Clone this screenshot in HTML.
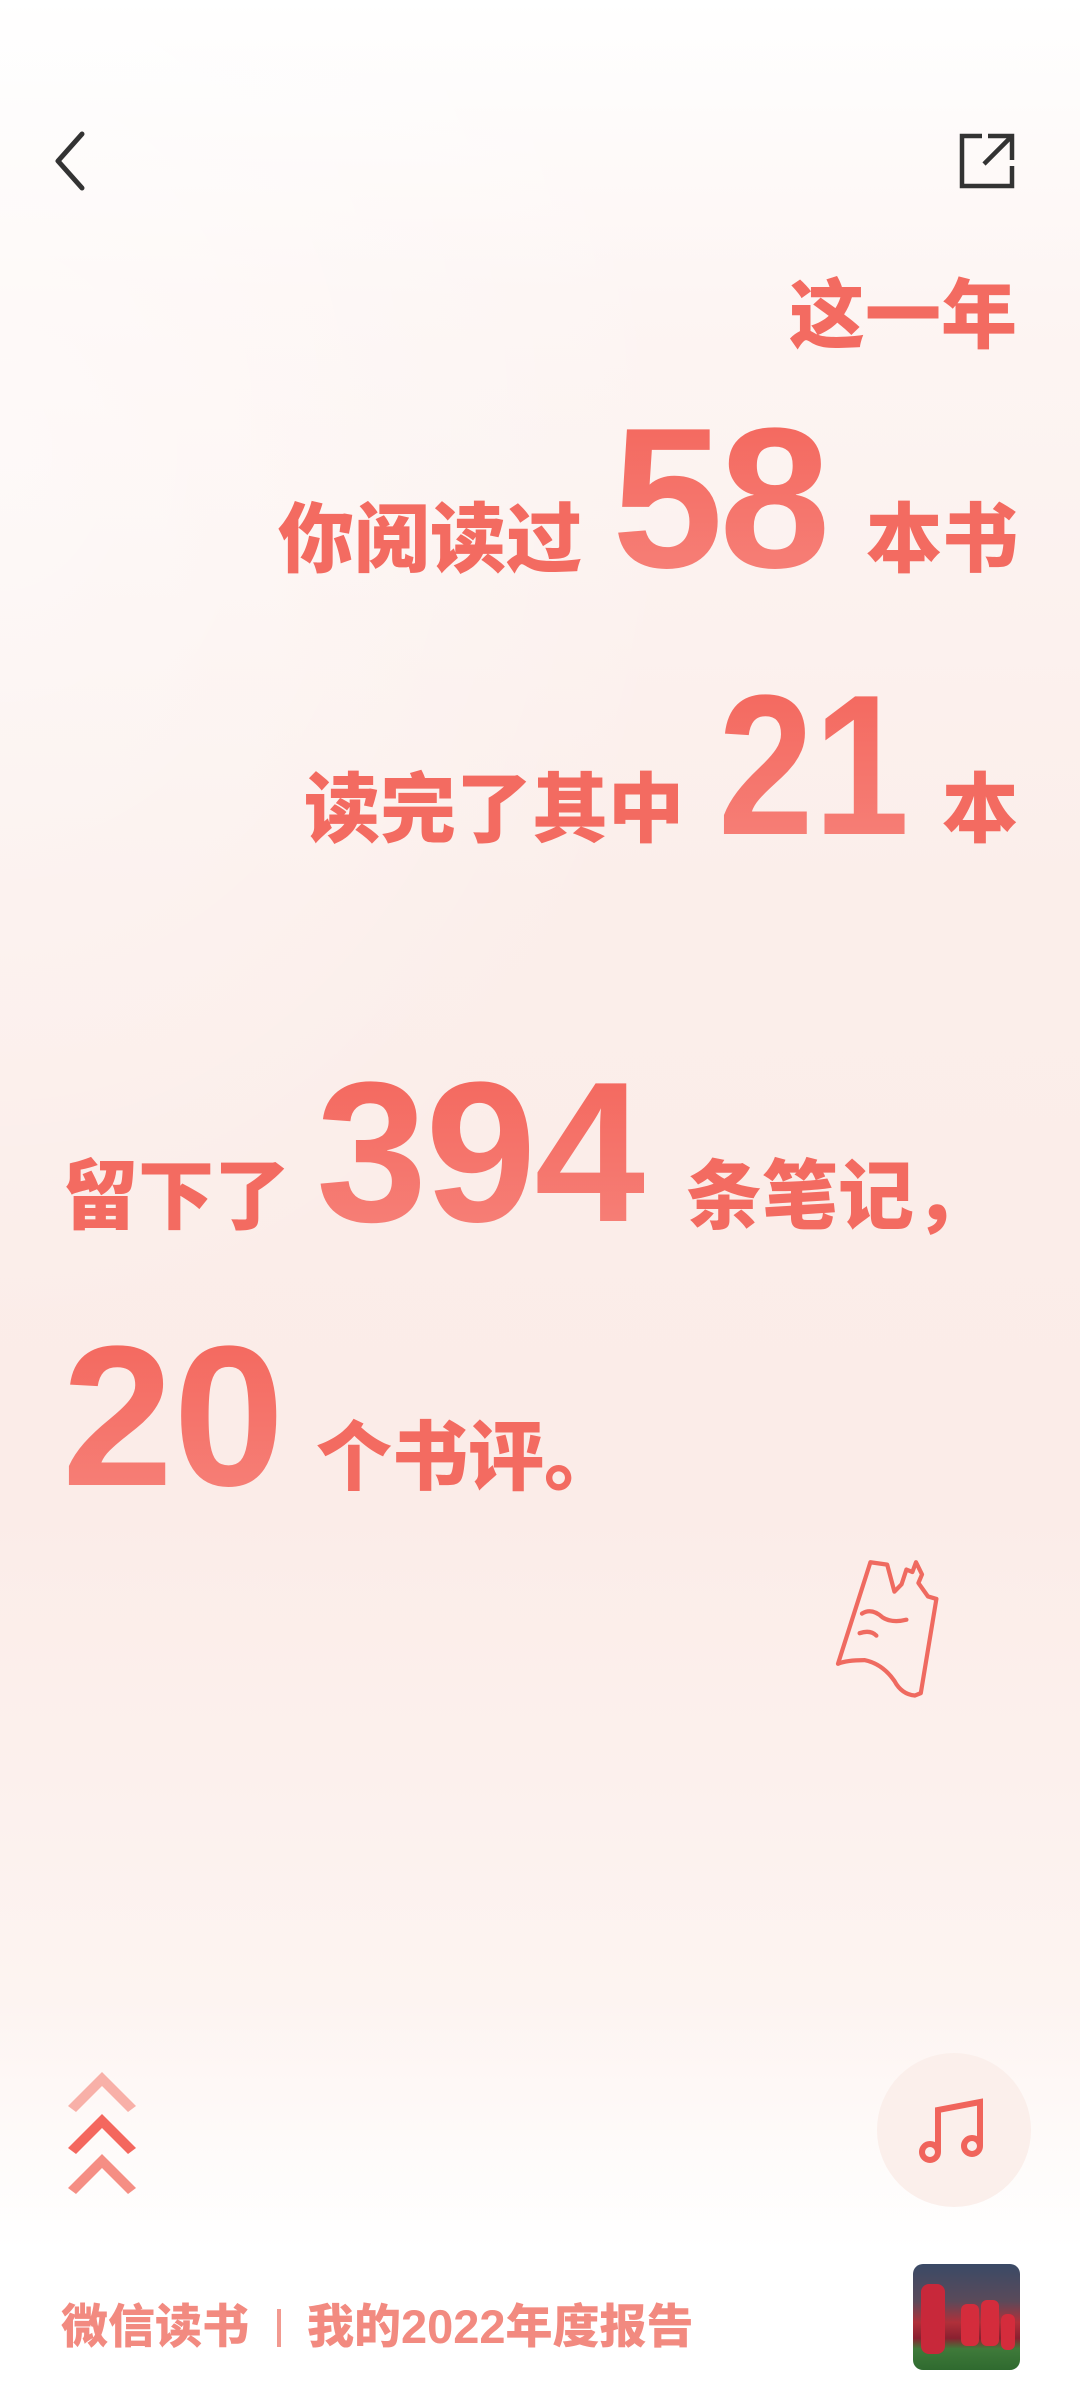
<!DOCTYPE html>
<html><head><meta charset="utf-8">
<style>
html,body{margin:0;padding:0}
body{width:1080px;height:2400px;position:relative;overflow:hidden;
background:linear-gradient(180deg,#ffffff 0px,#fdf5f3 300px,#fbeeea 900px,#fbece8 1500px,#fdf4f1 2000px,#fff 2250px);
font-family:"Liberation Sans","Noto Sans CJK SC",sans-serif;color:#f3685e}
.t{position:absolute;white-space:nowrap;line-height:1;font-family:"Liberation Sans","Noto Sans CJK SC",sans-serif;font-weight:900}
.c{font-size:76px;color:#f36b61}
.n{font-size:200px;font-weight:700;color:#f46a60;
background:linear-gradient(180deg,#f4665c,#f6827a);-webkit-background-clip:text;background-clip:text;-webkit-text-fill-color:transparent}
</style></head><body>
<div style="position:absolute;left:0;top:0;width:1080px;height:2250px;background:radial-gradient(ellipse 700px 900px at 0% 20%,rgba(255,255,255,0.5),rgba(255,255,255,0))"></div>
<div style="position:absolute;left:0;top:2250px;width:1080px;height:150px;background:#fff"></div>

<svg style="position:absolute;left:52px;top:130px" width="40" height="62" viewBox="0 0 40 62"><path d="M30 4 L6 31 L30 58" fill="none" stroke="#333" stroke-width="5" stroke-linecap="round" stroke-linejoin="round"/></svg>
<svg style="position:absolute;left:958px;top:132px" width="58" height="58" viewBox="0 0 58 58"><path d="M24 4 H4 V54 H54 V34" fill="none" stroke="#333" stroke-width="4.5"/><path d="M30 4 H54 V28 M54 4 L26 32" fill="none" stroke="#333" stroke-width="4.5"/></svg>

<div class="t c" style="right:63px;top:279px">这一年</div>

<div class="t c" style="left:278px;top:503px">你阅读过</div>
<div class="t n" style="left:612px;top:399px;letter-spacing:-4px">58</div>
<div class="t c" style="left:866px;top:503px">本书</div>

<div class="t c" style="left:304px;top:773px">读完了其中</div>
<div class="t n" style="left:718px;top:666px;transform:scaleX(0.86);transform-origin:left top">21</div>
<div class="t c" style="left:942px;top:773px">本</div>

<div class="t c" style="left:62px;top:1160px">留下了</div>
<div class="t n" style="left:316px;top:1053px;letter-spacing:-2px">394</div>
<div class="t c" style="left:686px;top:1160px">条笔记，</div>

<div class="t n" style="left:62px;top:1317px">20</div>
<div class="t c" style="left:316px;top:1421px">个书评。</div>

<svg style="position:absolute;left:832px;top:1550px" width="132" height="148" viewBox="0 0 110 121" preserveAspectRatio="none" fill="none" stroke="#ef6a60" stroke-width="3.5" stroke-linecap="round" stroke-linejoin="round">
<path d="M32 10 L46 12 L52 34 L58 28 L62 16 L67 18 L70 10 L75 20 L72 27 L80 38 L87 40 L74 117 L69 119 Q58 118 52 107 Q42 93 27 90 Q12 90 5 93 L32 10"/>
<path d="M25 52 Q33 47 42 55 Q50 60 62 57"/>
<path d="M23 68 Q32 65 37 70"/>
</svg>

<svg style="position:absolute;left:66px;top:2066px" width="72" height="130" viewBox="0 0 72 130">
<path d="M2 40 L36 6 L70 40 L62 46 L36 20 L10 46Z" fill="#f8b0a8"/>
<path d="M2 82 L36 48 L70 82 L62 88 L36 62 L10 88Z" fill="#f4675e"/>
<path d="M2 122 L36 88 L70 122 L62 128 L36 102 L10 128Z" fill="#f58e84"/>
</svg>

<div style="position:absolute;left:877px;top:2053px;width:154px;height:154px;border-radius:50%;background:#fbefeb"></div>
<svg style="position:absolute;left:918px;top:2098px" width="72" height="68" viewBox="0 0 72 68" fill="none" stroke="#f0645b" stroke-width="6">
<circle cx="12" cy="54" r="8"/><circle cx="54" cy="48" r="8"/>
<path d="M20 54 V12 L62 4 V48"/>
</svg>

<div class="t" style="left:61px;top:2303px;font-size:47px;color:#f28a80">微信读书<span style="display:inline-block;width:4px;height:38px;background:#f29a90;margin:0 26px 0 28px;vertical-align:-4px"></span>我的2022年度报告</div>

<div style="position:absolute;left:913px;top:2264px;width:107px;height:106px;border-radius:10px;overflow:hidden;background:linear-gradient(180deg,#3a4a66 0%,#5a4a5a 35%,#b0303a 55%,#8a2030 70%,#3f7a3a 80%,#2f6a2f 100%)">
<div style="position:absolute;left:8px;top:20px;width:24px;height:70px;background:#c8283a;border-radius:8px"></div>
<div style="position:absolute;left:48px;top:40px;width:18px;height:42px;background:#d42c3c;border-radius:6px"></div>
<div style="position:absolute;left:68px;top:36px;width:18px;height:46px;background:#d42c3c;border-radius:6px"></div>
<div style="position:absolute;left:88px;top:50px;width:14px;height:36px;background:#d42c3c;border-radius:6px"></div>
</div>
</body></html>
